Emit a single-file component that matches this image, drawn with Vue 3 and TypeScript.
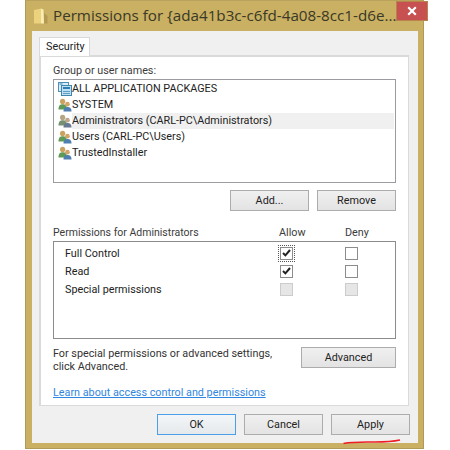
<script setup lang="ts">
interface Principal { name: string; kind: 'pkg' | 'user'; selected?: boolean }
interface Perm { name: string; allow: boolean; deny: boolean; disabled?: boolean; focus?: boolean }

const principals: Principal[] = [
  { name: 'ALL APPLICATION PACKAGES', kind: 'pkg' },
  { name: 'SYSTEM', kind: 'user' },
  { name: 'Administrators (CARL-PC\\Administrators)', kind: 'user', selected: true },
  { name: 'Users (CARL-PC\\Users)', kind: 'user' },
  { name: 'TrustedInstaller', kind: 'user' },
]
const perms: Perm[] = [
  { name: 'Full Control', allow: true, deny: false, focus: true },
  { name: 'Read', allow: true, deny: false },
  { name: 'Special permissions', allow: false, deny: false, disabled: true },
]
</script>

<template>
  <div class="window">
    <header class="titlebar">
      <svg class="folder" width="14" height="16" viewBox="0 0 14 16">
        <path d="M0 2 L7 0.5 L7 15.5 L0 15.5 Z" fill="#ecd27c" />
        <path d="M7 0.5 L9.5 1.5 L10 15.5 L7 15.5 Z" fill="#f9edb4" />
        <path d="M10 5 L13.5 8 L13.5 15.5 L10 15.5 Z" fill="#b39a52" />
      </svg>
      <span class="title">Permissions for {ada41b3c-c6fd-4a08-8cc1-d6e...</span>
      <button class="close">
        <svg width="10" height="10" viewBox="0 0 10 10">
          <path d="M1.2 1.2 L8.8 8.8 M8.8 1.2 L1.2 8.8" stroke="#fff" stroke-width="2.2" />
        </svg>
      </button>
    </header>

    <div class="dialog">
      <div class="tabstrip"><div class="tab">Security</div></div>
      <section class="panel">
        <div class="label">Group or user names:</div>
        <ul class="list">
          <li v-for="p in principals" :key="p.name" class="row">
            <svg v-if="p.kind === 'pkg'" class="ico" width="14" height="14" viewBox="0 0 14 14">
              <rect x="0.5" y="0.5" width="10" height="9" fill="#d9ecf7" stroke="#4f8fb5" />
              <rect x="3.5" y="3.5" width="10" height="10" fill="#bfe0f2" stroke="#3f86ad" />
              <rect x="5" y="5" width="7" height="2" fill="#2f7fb5" />
              <rect x="5" y="9" width="7" height="1" fill="#5f9fc5" />
              <rect x="5" y="11" width="7" height="1" fill="#5f9fc5" />
              <rect x="1.5" y="1.5" width="3" height="1" fill="#2f7fb5" />
            </svg>
            <svg v-else class="ico" :class="{ dim: p.selected }" width="14" height="14" viewBox="0 0 14 14">
              <circle cx="4.6" cy="3.4" r="2.6" fill="#c9a25f" />
              <path d="M0.5 11.5 C0.5 7.5 2.2 6.3 4.8 6.3 C7.4 6.3 9 7.5 9 11.5 Z" fill="#5f9a55" />
              <circle cx="9.4" cy="6.2" r="2.4" fill="#d3a56c" />
              <path d="M5.5 13.5 C5.5 10 7 9 9.4 9 C11.8 9 13.5 10 13.5 13.5 Z" fill="#4f7fb0" />
            </svg>
            <span class="name" :class="{ selected: p.selected }">{{ p.name }}</span>
          </li>
        </ul>

        <div class="actions">
          <button class="btn w79">Add...</button>
          <button class="btn w79">Remove</button>
        </div>

        <div class="perm-head">
          <span class="perm-title">Permissions for Administrators</span>
          <span class="col">Allow</span>
          <span class="col deny">Deny</span>
        </div>
        <div class="perm-box">
          <div v-for="p in perms" :key="p.name" class="perm-row">
            <span class="perm-name">{{ p.name }}</span>
            <span class="cell">
              <span class="focus" :class="{ on: p.focus }">
                <span class="check" :class="{ off: p.disabled }">
                  <svg v-if="p.allow" width="9" height="8" viewBox="0 0 9 8">
                    <path d="M1 4 L3.4 6.4 L8 1" fill="none" stroke="#222" stroke-width="2" />
                  </svg>
                </span>
              </span>
            </span>
            <span class="cell deny-cell">
              <span class="check" :class="{ off: p.disabled }"></span>
            </span>
          </div>
        </div>

        <div class="advanced">
          <p class="hint">For special permissions or advanced settings,<br />click Advanced.</p>
          <button class="btn adv">Advanced</button>
        </div>
        <a class="link" href="#">Learn about access control and permissions</a>
      </section>

      <footer class="footer">
        <button class="btn w79 default">OK</button>
        <button class="btn w79">Cancel</button>
        <span class="apply">
          <button class="btn w79">Apply</button>
          <svg class="scribble" width="58" height="8" viewBox="0 0 58 8">
            <path d="M0.5 5.5 C10 3.5 22 4 32 4 C42 4 50 3.5 57 2" fill="none" stroke="#ee1c25" stroke-width="1.6" />
          </svg>
        </span>
      </footer>
    </div>
  </div>
</template>

<style>
html, body { background: #fff; }
</style>

<style scoped>
.window {
  box-sizing: border-box;
  width: 399px;
  height: 449px;
  margin-left: 25px;
  background: #c9b062;
  border: 1px solid #b09a55;
  border-top-color: #b8a25c;
  padding: 0 5px 5px 6px;
  display: flex;
  flex-direction: column;
  font-family: Roboto, "Liberation Sans", sans-serif;
  font-size: 10.8px;
  color: #222;
}
.titlebar {
  height: 30px;
  flex: none;
  display: flex;
  align-items: flex-start;
}
.folder { margin: 7px 0 0 2px; flex: none; }
.title {
  margin: 4px 0 0 5px;
  font-family: "Open Sans", sans-serif;
  font-size: 15.2px;
  line-height: 21px;
  color: #3a3826;
  white-space: nowrap;
  flex: 1;
}
.close {
  width: 32px;
  height: 20px;
  padding: 0;
  border: 1px solid #b9834e;
  background: #c75050;
  display: flex;
  align-items: center;
  justify-content: center;
  flex: none;
}
.dialog {
  flex: 1;
  min-height: 0;
  background: #f0f0f0;
  padding: 6px 9px 0 7px;
  display: flex;
  flex-direction: column;
}
.tabstrip { height: 18px; flex: none; display: flex; }
.tab {
  box-sizing: border-box;
  width: 51px;
  height: 19px;
  background: #fff;
  border: 1px solid #d9d9d9;
  border-bottom: none;
  padding: 1px 0 0 6px;
  line-height: 16px;
  position: relative;
  z-index: 1;
}
.panel {
  box-sizing: border-box;
  height: 351px;
  flex: none;
  background: #fff;
  border: 2px solid #dadada;
  border-width: 2px 1px 1px 2px;
  padding: 0 12px;
  display: flex;
  flex-direction: column;
}
.label { flex: none; height: 16px; line-height: 16px; padding-top: 6px; color: #3c3c3c; }
.list {
  list-style: none;
  box-sizing: border-box;
  flex: none;
  margin: 0;
  padding: 1px 1px 0 4px;
  height: 104px;
  border: 1px solid #9b9ba0;
}
.row { height: 16px; display: flex; align-items: center; gap: 0; }
.ico { flex: none; }
.ico.dim { filter: saturate(0.45); }
.name {
  flex: 1;
  line-height: 16px;
  padding-left: 0;
  white-space: nowrap;
}
.name.selected { background: #f0f0f0; }
.actions {
  display: flex;
  flex: none;
  justify-content: flex-end;
  gap: 8px;
  margin-top: 7px;
}
.btn {
  box-sizing: border-box;
  height: 21px;
  padding: 0;
  font: inherit;
  color: #222;
  background: linear-gradient(#f0f0f0, #e3e3e3);
  border: 1px solid #acacac;
}
.w79 { width: 79px; }
.adv { width: 95px; flex: none; }
.default { border: 1px solid #4a9fe8; background: linear-gradient(#f3f6f9, #e6e9ec); }
.perm-head {
  display: flex;
  flex: none;
  align-items: center;
  height: 16px;
  margin-top: 13px;
  color: #3c3c3c;
}
.perm-title { width: 226px; font-size: 10.5px; }
.col { width: 66px; }
.col.deny { width: auto; }
.perm-box {
  box-sizing: border-box;
  flex: none;
  height: 98px;
  margin-top: 1px;
  padding-top: 2px;
  border: 1px solid #8c8c8c;
}
.perm-row { height: 18px; display: flex; align-items: center; }
.perm-name { width: 213px; padding-left: 11px; flex: none; box-sizing: border-box; }
.cell { width: 64px; display: flex; flex: none; padding-left: 13px; box-sizing: border-box; }
.deny-cell { padding-left: 14px; }
.focus { display: flex; border: 1px dotted transparent; padding: 1px; margin: -2px; }
.focus.on { border-color: #555; }
.check {
  box-sizing: border-box;
  width: 13px;
  height: 13px;
  background: #fff;
  border: 1px solid #8c8c8c;
  display: flex;
  align-items: center;
  justify-content: center;
}
.check.off { background: #e6e6e6; border-color: #ccc; }
.advanced {
  display: flex;
  flex: none;
  justify-content: space-between;
  margin-top: 8px;
}
.hint { margin: 0; line-height: 13px; color: #333; white-space: nowrap; }
.link {
  flex: none;
  margin-top: 12px;
  align-self: flex-start;
  line-height: 16px;
  color: #2f86e0;
  text-decoration: underline;
  white-space: nowrap;
}
.footer {
  display: flex;
  flex: none;
  justify-content: flex-end;
  gap: 8px;
  margin-top: 8px;
  margin-right: -1px;
}
.apply { position: relative; display: flex; }
.scribble { position: absolute; left: 12px; top: 24px; }
</style>
